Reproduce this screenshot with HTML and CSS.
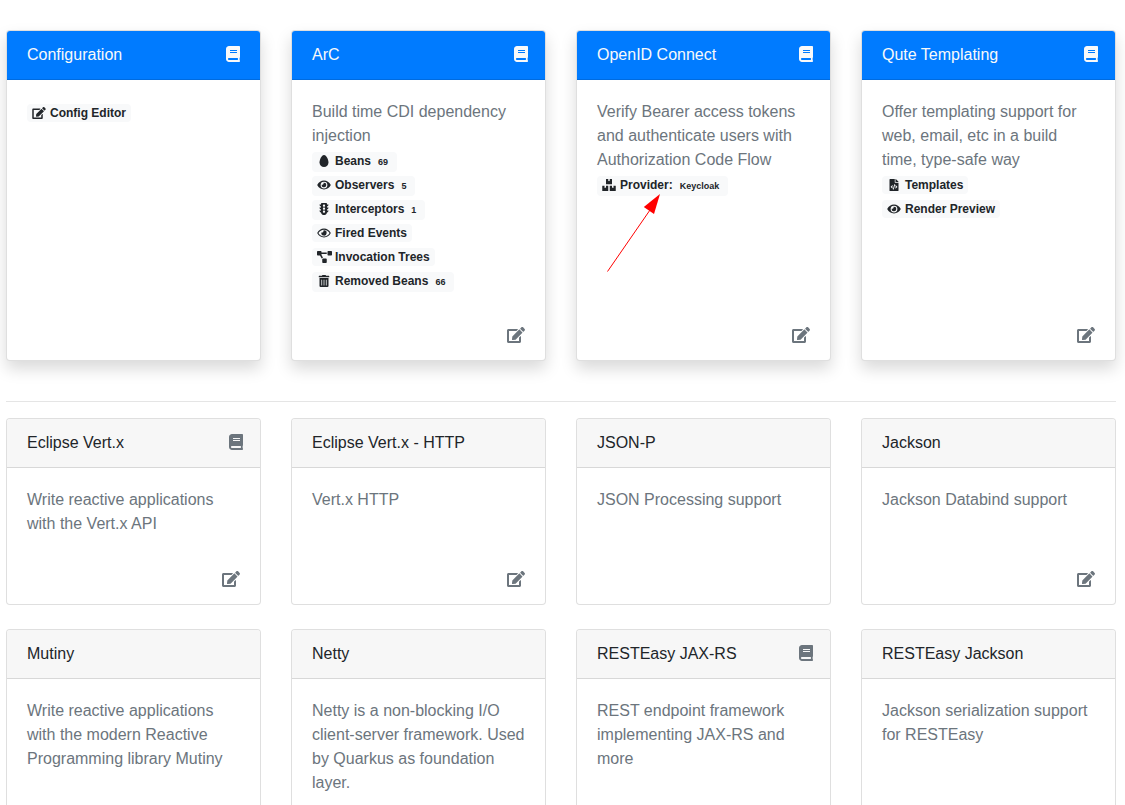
FILE: index.html
```html
<!DOCTYPE html>
<html lang="en">
<head>
<meta charset="utf-8">
<meta name="viewport" content="width=device-width, initial-scale=1">
<title>Dev UI</title>
<link rel="stylesheet" href="styles.css">
</head>
<body>
<svg class="sprite" aria-hidden="true">
  <symbol id="book" viewBox="0 0 448 512"><path d="M448 360V24c0-13.3-10.7-24-24-24H96C43 0 0 43 0 96v320c0 53 43 96 96 96h328c13.3 0 24-10.7 24-24v-16c0-7.5-3.5-14.3-8.9-18.7-4.2-15.4-4.2-59.3 0-74.7 5.4-4.3 8.9-11.1 8.9-18.6zM128 134c0-3.3 2.7-6 6-6h212c3.3 0 6 2.7 6 6v20c0 3.3-2.7 6-6 6H134c-3.3 0-6-2.7-6-6v-20zm0 64c0-3.3 2.7-6 6-6h212c3.3 0 6 2.7 6 6v20c0 3.3-2.7 6-6 6H134c-3.3 0-6-2.7-6-6v-20zm253.4 250H96c-17.7 0-32-14.3-32-32 0-17.6 14.4-32 32-32h285.4c-1.9 17.1-1.9 46.9 0 64z"/></symbol>
  <symbol id="edit" viewBox="0 0 576 512"><path d="M402.6 83.2l90.2 90.2c3.8 3.8 3.8 10 0 13.8L274.4 405.6l-92.8 10.3c-12.4 1.4-22.9-9.1-21.5-21.5l10.3-92.8L388.8 83.2c3.8-3.8 10-3.8 13.8 0zm162-22.9l-48.8-48.8c-15.2-15.2-39.9-15.2-55.2 0l-35.4 35.4c-3.8 3.8-3.8 10 0 13.8l90.2 90.2c3.8 3.8 10 3.8 13.8 0l35.4-35.4c15.2-15.3 15.2-40 0-55.2zM384 346.2V448H64V128h229.8c3.2 0 6.2-1.3 8.5-3.5l40-40c7.6-7.6 2.2-20.5-8.5-20.5H48C21.5 64 0 85.5 0 112v352c0 26.5 21.5 48 48 48h352c26.5 0 48-21.5 48-48V306.2c0-10.7-12.9-16-20.5-8.5l-40 40c-2.2 2.3-3.5 5.3-3.5 8.5z"/></symbol>
  <symbol id="egg" viewBox="0 0 384 512"><path d="M192 0C86 0 0 214 0 320s86 192 192 192 192-86 192-192S298 0 192 0z"/></symbol>
  <symbol id="eye" viewBox="0 0 576 512"><path d="M572.52 241.4C518.29 135.59 410.93 64 288 64S57.68 135.64 3.48 241.41a32.35 32.35 0 0 0 0 29.19C57.71 376.41 165.07 448 288 448s230.32-71.64 284.52-177.41a32.35 32.35 0 0 0 0-29.19zM288 400a144 144 0 1 1 144-144 143.93 143.93 0 0 1-144 144zm0-240a95.31 95.31 0 0 0-25.31 3.79 47.85 47.85 0 0 1-66.9 66.9A95.78 95.78 0 1 0 288 160z"/></symbol>
  <symbol id="eye-outline" viewBox="0 0 576 512"><path d="M288 144a110.94 110.94 0 0 0-31.24 5 55.4 55.4 0 0 1 7.24 27 56 56 0 0 1-56 56 55.4 55.4 0 0 1-27-7.24A111.71 111.71 0 1 0 288 144zm284.52 97.4C518.29 135.59 410.93 64 288 64S57.68 135.64 3.48 241.41a32.35 32.35 0 0 0 0 29.19C57.71 376.41 165.07 448 288 448s230.32-71.64 284.52-177.41a32.35 32.35 0 0 0 0-29.19zM288 400c-98.65 0-189.09-55-237.93-144C98.91 167 189.34 112 288 112s189.09 55 237.93 144C477.1 345 386.66 400 288 400z"/></symbol>
  <symbol id="traffic-light" viewBox="0 0 384 512"><path d="M384 192h-64v-37.88c37.2-13.22 64-48.38 64-90.12h-64V32c0-17.67-14.33-32-32-32H96C78.33 0 64 14.33 64 32v32H0c0 41.74 26.8 76.9 64 90.12V192H0c0 41.74 26.8 76.9 64 90.12V320H0c0 42.84 28.25 78.69 66.99 91.05C79.42 468.72 130.6 512 192 512s112.58-43.28 125.01-100.95C355.75 398.69 384 362.84 384 320h-64v-37.88c37.2-13.22 64-48.38 64-90.12zM192 416c-26.51 0-48-21.49-48-48s21.49-48 48-48 48 21.49 48 48-21.49 48-48 48zm0-128c-26.51 0-48-21.49-48-48s21.49-48 48-48 48 21.49 48 48-21.49 48-48 48zm0-128c-26.51 0-48-21.49-48-48s21.49-48 48-48 48 21.49 48 48-21.49 48-48 48z"/></symbol>
  <symbol id="diagram" viewBox="0 0 640 512"><path d="M384 320H256c-17.67 0-32 14.33-32 32v128c0 17.67 14.33 32 32 32h128c17.67 0 32-14.33 32-32V352c0-17.67-14.33-32-32-32zM192 32c0-17.67-14.33-32-32-32H32C14.33 0 0 14.33 0 32v128c0 17.67 14.33 32 32 32h95.72l73.16 128.04C211.98 300.98 232.4 288 256 288h.28L192 175.51V128h224V64H192V32zM608 0H480c-17.67 0-32 14.33-32 32v128c0 17.67 14.33 32 32 32h128c17.67 0 32-14.33 32-32V32c0-17.67-14.33-32-32-32z"/></symbol>
  <symbol id="trash" viewBox="0 0 448 512"><path d="M32 464a48 48 0 0 0 48 48h288a48 48 0 0 0 48-48V128H32zm272-256a16 16 0 0 1 32 0v224a16 16 0 0 1-32 0zm-96 0a16 16 0 0 1 32 0v224a16 16 0 0 1-32 0zm-96 0a16 16 0 0 1 32 0v224a16 16 0 0 1-32 0zM432 32H312l-9.4-18.7A24 24 0 0 0 281.1 0H166.8a23.72 23.72 0 0 0-21.4 13.3L136 32H16A16 16 0 0 0 0 48v32a16 16 0 0 0 16 16h416a16 16 0 0 0 16-16V48a16 16 0 0 0-16-16z"/></symbol>
  <symbol id="boxes" viewBox="0 0 576 512"><path d="M560 288h-80v96l-32-21.3-32 21.3v-96h-80c-8.8 0-16 7.2-16 16v192c0 8.8 7.2 16 16 16h224c8.8 0 16-7.2 16-16V304c0-8.8-7.2-16-16-16zm-384-64h224c8.8 0 16-7.2 16-16V16c0-8.8-7.2-16-16-16h-80v96l-32-21.3L256 96V0h-80c-8.8 0-16 7.2-16 16v192c0 8.8 7.2 16 16 16zm64 64h-80v96l-32-21.3L96 384v-96H16c-8.8 0-16 7.2-16 16v192c0 8.8 7.2 16 16 16h224c8.8 0 16-7.2 16-16V304c0-8.8-7.2-16-16-16z"/></symbol>
  <symbol id="file-code" viewBox="0 0 384 512"><path d="M384 121.941V128H256V0h6.059c6.365 0 12.47 2.529 16.971 7.029l97.941 97.941A24.005 24.005 0 0 1 384 121.941zM248 160c-13.2 0-24-10.8-24-24V0H24C10.745 0 0 10.745 0 24v464c0 13.255 10.745 24 24 24h336c13.255 0 24-10.745 24-24V160H248zM123.206 400.505a5.4 5.4 0 0 1-7.633.246l-64.866-60.812a5.4 5.4 0 0 1 0-7.879l64.866-60.812a5.4 5.4 0 0 1 7.633.246l19.579 20.885a5.4 5.4 0 0 1-.372 7.747L101.65 336l40.763 35.874a5.4 5.4 0 0 1 .372 7.747l-19.579 20.884zm51.295 50.479l-27.453-7.97a5.402 5.402 0 0 1-3.681-6.692l61.44-211.626a5.402 5.402 0 0 1 6.692-3.681l27.452 7.97a5.4 5.4 0 0 1 3.68 6.692l-61.44 211.626a5.397 5.397 0 0 1-6.69 3.681zm160.792-111.045l-64.866 60.812a5.4 5.4 0 0 1-7.633-.246l-19.58-20.885a5.4 5.4 0 0 1 .372-7.747L284.35 336l-40.763-35.874a5.4 5.4 0 0 1-.372-7.747l19.58-20.885a5.4 5.4 0 0 1 7.633-.246l64.866 60.812a5.4 5.4 0 0 1-.001 7.879z"/></symbol>
</svg>

<main class="page">
  <section class="cards">
    <article class="card card-active">
      <header class="card-header header-flush"><span>Configuration</span><a class="guide" href="#" aria-label="Configuration guide"><svg class="icon-book"><use href="#book"/></svg></a></header>
      <div class="card-body">
        <ul class="links">
          <li><a class="badge" href="#"><svg class="icon"><use href="#edit"/></svg>Config Editor</a></li>
        </ul>
      </div>
    </article>

    <article class="card card-active">
      <header class="card-header"><span>ArC</span><a class="guide" href="#" aria-label="ArC guide"><svg class="icon-book"><use href="#book"/></svg></a></header>
      <div class="card-body">
        <p class="text">Build time CDI dependency injection</p>
        <ul class="links">
          <li><a class="badge" href="#"><svg class="icon"><use href="#egg"/></svg>Beans <span class="count">69</span></a></li>
          <li><a class="badge" href="#"><svg class="icon"><use href="#eye"/></svg>Observers <span class="count">5</span></a></li>
          <li><a class="badge" href="#"><svg class="icon"><use href="#traffic-light"/></svg>Interceptors <span class="count">1</span></a></li>
          <li><a class="badge" href="#"><svg class="icon"><use href="#eye-outline"/></svg>Fired Events</a></li>
          <li><a class="badge" href="#"><svg class="icon icon-wide"><use href="#diagram"/></svg>Invocation Trees</a></li>
          <li><a class="badge" href="#"><svg class="icon"><use href="#trash"/></svg>Removed Beans <span class="count">66</span></a></li>
        </ul>
      </div>
      <footer class="card-footer"><button class="edit" type="button" aria-label="Edit ArC configuration"><svg class="icon-edit"><use href="#edit"/></svg></button></footer>
    </article>

    <article class="card card-active">
      <header class="card-header"><span>OpenID Connect</span><a class="guide" href="#" aria-label="OpenID Connect guide"><svg class="icon-book"><use href="#book"/></svg></a></header>
      <div class="card-body">
        <p class="text">Verify Bearer access tokens and authenticate users with Authorization Code Flow</p>
        <ul class="links">
          <li><a class="badge" href="#"><svg class="icon"><use href="#boxes"/></svg>Provider: <span class="count">Keycloak</span></a></li>
        </ul>
      </div>
      <footer class="card-footer"><button class="edit" type="button" aria-label="Edit OpenID Connect configuration"><svg class="icon-edit"><use href="#edit"/></svg></button></footer>
      <svg class="pointer" viewBox="0 0 56 80" aria-hidden="true"><path class="pointer-line" d="M.5 78.5L43 17"/><path class="pointer-head" d="M53 1L36.800 14L47 21z"/></svg>
    </article>

    <article class="card card-active">
      <header class="card-header"><span>Qute Templating</span><a class="guide" href="#" aria-label="Qute Templating guide"><svg class="icon-book"><use href="#book"/></svg></a></header>
      <div class="card-body">
        <p class="text">Offer templating support for web, email, etc in a build time, type-safe way</p>
        <ul class="links">
          <li><a class="badge" href="#"><svg class="icon"><use href="#file-code"/></svg>Templates</a></li>
          <li><a class="badge" href="#"><svg class="icon"><use href="#eye"/></svg>Render Preview</a></li>
        </ul>
      </div>
      <footer class="card-footer"><button class="edit" type="button" aria-label="Edit Qute Templating configuration"><svg class="icon-edit"><use href="#edit"/></svg></button></footer>
    </article>
  </section>

  <hr class="divider">

  <section class="cards">
    <article class="card">
      <header class="card-header"><span>Eclipse Vert.x</span><a class="guide" href="#" aria-label="Eclipse Vert.x guide"><svg class="icon-book"><use href="#book"/></svg></a></header>
      <div class="card-body"><p class="text">Write reactive applications with the Vert.x API</p></div>
      <footer class="card-footer"><button class="edit" type="button" aria-label="Edit Eclipse Vert.x configuration"><svg class="icon-edit"><use href="#edit"/></svg></button></footer>
    </article>
    <article class="card">
      <header class="card-header"><span>Eclipse Vert.x - HTTP</span></header>
      <div class="card-body"><p class="text">Vert.x HTTP</p></div>
      <footer class="card-footer"><button class="edit" type="button" aria-label="Edit Eclipse Vert.x - HTTP configuration"><svg class="icon-edit"><use href="#edit"/></svg></button></footer>
    </article>
    <article class="card">
      <header class="card-header"><span>JSON-P</span></header>
      <div class="card-body"><p class="text">JSON Processing support</p></div>
    </article>
    <article class="card">
      <header class="card-header"><span>Jackson</span></header>
      <div class="card-body"><p class="text">Jackson Databind support</p></div>
      <footer class="card-footer"><button class="edit" type="button" aria-label="Edit Jackson configuration"><svg class="icon-edit"><use href="#edit"/></svg></button></footer>
    </article>
    <article class="card">
      <header class="card-header"><span>Mutiny</span></header>
      <div class="card-body"><p class="text">Write reactive applications with the modern Reactive Programming library Mutiny</p></div>
    </article>
    <article class="card">
      <header class="card-header"><span>Netty</span></header>
      <div class="card-body"><p class="text">Netty is a non-blocking I/O client-server framework. Used by Quarkus as foundation layer.</p></div>
    </article>
    <article class="card">
      <header class="card-header"><span>RESTEasy JAX-RS</span><a class="guide" href="#" aria-label="RESTEasy JAX-RS guide"><svg class="icon-book"><use href="#book"/></svg></a></header>
      <div class="card-body"><p class="text">REST endpoint framework implementing JAX-RS and more</p></div>
    </article>
    <article class="card">
      <header class="card-header"><span>RESTEasy Jackson</span></header>
      <div class="card-body"><p class="text">Jackson serialization support for RESTEasy</p></div>
    </article>
  </section>
</main>
</body>
</html>
```

FILE: styles.css
```css
*,
*::before,
*::after {
  box-sizing: border-box;
}

body {
  margin: 0;
  background: #fff;
  color: #212529;
  font: 16px/24px "Liberation Sans", Arial, sans-serif;
}

svg {
  display: block;
  fill: currentColor;
}

.sprite {
  display: none;
}

.page {
  padding: 30px 9px 24px 6px;
}

.cards {
  display: grid;
  grid-template-columns: repeat(4, minmax(0, 1fr));
  gap: 24px 30px;
}

.card {
  position: relative;
  display: flex;
  flex-direction: column;
  border: 1px solid rgba(0, 0, 0, 0.125);
  border-radius: 4px;
  background: #fff;
  background-clip: border-box;
}

.card-active {
  box-shadow: 0 8px 16px rgba(0, 0, 0, 0.15);
}

.card-header {
  display: flex;
  align-items: center;
  justify-content: space-between;
  padding: 12px 17px 12px 20px;
  border-bottom: 1px solid rgba(0, 0, 0, 0.125);
  border-radius: 3px 3px 0 0;
  background: #f7f7f7;
}

.header-flush {
  padding-right: 20px;
}

.card-active .card-header {
  background: #007bff;
  color: #f8f9fa;
}

.guide {
  padding-bottom: 2px;
  color: #6c757d;
}

.card-active .guide {
  color: #f8f9fa;
}

.icon-book {
  width: 14px;
  height: 16px;
}

.card-body {
  flex: 1;
  padding: 20px;
}

.text {
  margin: 0;
  color: #6c757d;
}

.links {
  margin: 0;
  padding: 0;
  list-style: none;
}

.links li {
  display: flex;
  align-items: flex-start;
  height: 24px;
  padding-top: 4px;
}

.badge {
  display: flex;
  align-items: baseline;
  padding: 3px 5px;
  border-radius: 4px;
  background: #f8f9fa;
  color: #212529;
  font-size: 12px;
  font-weight: 700;
  line-height: 12px;
  text-decoration: none;
  white-space: nowrap;
}

.icon {
  align-self: flex-start;
  width: 14px;
  height: 12px;
  margin-right: 4px;
}

.icon-wide {
  width: 15px;
  margin-right: 3px;
}

.count {
  margin-left: 3px;
  padding: 2px 4px;
  font-size: 9px;
  line-height: 9px;
}

.card-footer {
  display: flex;
  justify-content: flex-end;
  padding: 12px 20px;
}

.edit {
  display: flex;
  align-items: center;
  height: 24px;
  padding: 0 0 2px;
  border: 0;
  background: none;
  color: #6c757d;
  cursor: pointer;
}

.icon-edit {
  width: 18px;
  height: 16px;
}

.divider {
  margin: 40px 0 16px;
  border: 0;
  border-top: 1px solid rgba(0, 0, 0, 0.1);
}

/* Annotation arrow drawn over the card, pointing at the provider badge */
.pointer {
  position: absolute;
  top: 162px;
  left: 30px;
  width: 56px;
  height: 80px;
  pointer-events: none;
}

.pointer-line {
  fill: none;
  stroke: #f00;
  stroke-width: 1;
}

.pointer-head {
  fill: #f00;
}
```
